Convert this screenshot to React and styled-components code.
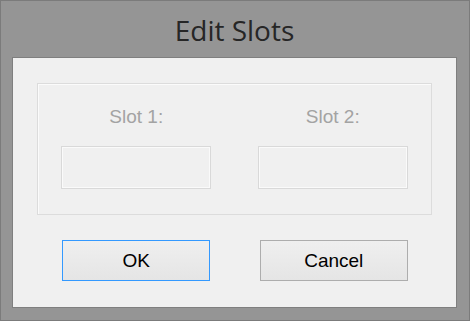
import React from "react";
import styled, { createGlobalStyle } from "styled-components";

const Global = createGlobalStyle`
  html, body { margin: 0; padding: 0; background: #959595; }
  * { box-sizing: border-box; }
`;

const Window = styled.div`
  width: 470px;
  height: 321px;
  background: #959595;
  border: 1px solid #7b7b7b;
  display: flex;
  flex-direction: column;
  padding: 0 12px 12px 11px;
`;

const Title = styled.div`
  height: 56px;
  line-height: 56px;
  padding-top: 1px;
  text-align: center;
  font-family: "Open Sans", "Noto Sans", sans-serif;
  font-size: 28px;
  color: #262626;
`;

const Panel = styled.div`
  flex: 1;
  background: #f0f0f0;
  border: 1px solid #7f7f7f;
  display: flex;
  flex-direction: column;
  padding: 25px 24px 26px 24px;
`;

const Group = styled.div`
  height: 132px;
  border: 1px solid #dcdcdc;
  box-shadow: inset 1px 1px 0 #fbfbfb;
  display: grid;
  grid-template-columns: 1fr 1fr;
  padding: 22px 0 0 0;
`;

const Field = styled.div`
  display: flex;
  flex-direction: column;
  align-items: center;
  gap: 18px;
`;

const Label = styled.div`
  font-family: "Liberation Sans", Arial, sans-serif;
  font-size: 19px;
  line-height: 22px;
  color: #a3a3a3;
`;

const Input = styled.div`
  width: 150px;
  height: 43px;
  border: 1px solid #d9d9d9;
  box-shadow: inset 0 0 0 1px #fafafa;
  background: #f0f0f0;
`;

const Buttons = styled.div`
  margin-top: 25px;
  display: grid;
  grid-template-columns: 1fr 1fr;
  padding: 0 1px;
`;

const Button = styled.button`
  justify-self: center;
  width: 148px;
  height: 41px;
  margin-left: ${(p) => p.$shift}px;
  border: 1px solid ${(p) => (p.$default ? "#3399ff" : "#adadad")};
  background: linear-gradient(#efefef, #e5e5e5);
  font-family: "Liberation Sans", Arial, sans-serif;
  font-size: 19px;
  color: #000;
  padding: 0;
  border-radius: 0;
`;

export default function App() {
  return (
    <>
      <Global />
      <Window>
        <Title>Edit Slots</Title>
        <Panel>
          <Group>
            <Field>
              <Label>Slot 1:</Label>
              <Input />
            </Field>
            <Field>
              <Label>Slot 2:</Label>
              <Input />
            </Field>
          </Group>
          <Buttons>
            <Button $default $shift={0}>OK</Button>
            <Button $shift={2}>Cancel</Button>
          </Buttons>
        </Panel>
      </Window>
    </>
  );
}
